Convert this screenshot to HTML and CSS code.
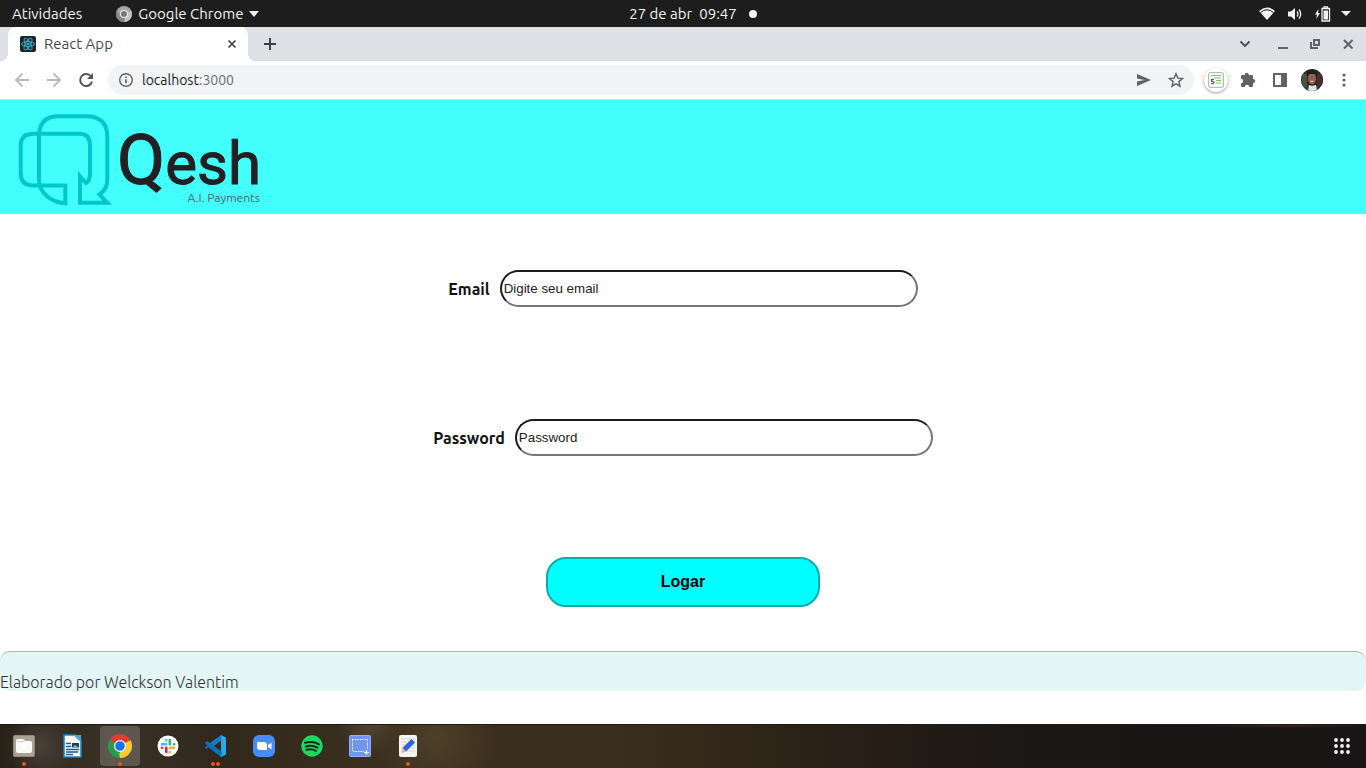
FILE: index.html
```html
<!DOCTYPE html>
<html lang="pt-BR">
<head>
<meta charset="utf-8">
<title>React App</title>
<link rel="stylesheet" href="styles.css">
</head>
<body>
<div class="topbar">
  <div class="topbar-left">
    <button class="bar-btn">Atividades</button>
    <button class="bar-btn app-menu">
      <svg width="16" height="16" viewBox="0 0 16 16"><circle cx="8" cy="8" r="8" fill="#a6a6a6"/><path d="M8 8 15.3 5A8 8 0 0 1 8 16Z" fill="#c4c4c4"/><path d="M1 4A8 8 0 0 0 8 16L10 10H4Z" fill="#858585"/><circle cx="8" cy="8" r="4" fill="#eee"/><circle cx="8" cy="8" r="3" fill="#777"/></svg>
      <span>Google Chrome</span>
      <svg width="10" height="6" viewBox="0 0 10 6"><path d="M0 0h10L5 6Z" fill="#f2f2f2"/></svg>
    </button>
  </div>
  <button class="bar-btn clock"><span>27 de abr</span><span>09:47</span><i class="dot"></i></button>
  <div class="tray">
    <svg width="16" height="16" viewBox="0 0 16 16"><path d="M0 5Q8-2 16 5L8 14Z" fill="#f2f2f2"/><path d="M1.500 6.500Q8 1 14.500 6.500" fill="none" stroke="#1d1d1d"/></svg>
    <svg width="16" height="16" viewBox="0 0 16 16"><path d="M1 5.500h3L8 2v12L4 10.500H1Z" fill="#f2f2f2"/><path d="M10 5.500q2 2.500 0 5M12 3.500q3.500 4.500 0 9" fill="none" stroke="#f2f2f2" stroke-width="1.300"/></svg>
    <svg width="16" height="16" viewBox="0 0 16 16"><path d="M3.500 3 0 8.500h2L1.300 13 5 7H3Z" fill="#f2f2f2"/><path d="M7 2.500h7.500v12.500H7ZM9 .8h3.500v1.700H9Z" fill="none" stroke="#f2f2f2" stroke-width="1.300"/><path d="M8.500 4.500h4.500v9H8.500Z" fill="#f2f2f2"/></svg>
    <svg class="caret" width="10" height="6" viewBox="0 0 10 6"><path d="M0 0h10L5 5Z" fill="#f2f2f2"/></svg>
  </div>
</div>

<div class="tabstrip">
  <div class="tab">
    <svg width="16" height="16" viewBox="0 0 16 16"><rect width="16" height="16" rx="2" fill="#20232a"/><g fill="none" stroke="#35b5cf" stroke-width=".9"><ellipse cx="8" cy="8" rx="6.500" ry="2.500"/><ellipse cx="8" cy="8" rx="6.500" ry="2.500" transform="rotate(60 8 8)"/><ellipse cx="8" cy="8" rx="6.500" ry="2.500" transform="rotate(120 8 8)"/></g><circle cx="8" cy="8" r="1.300" fill="#35b5cf"/></svg>
    <span class="tab-title">React App</span>
    <button class="icon-btn" aria-label="Fechar guia"><svg width="16" height="16" viewBox="0 0 16 16"><path d="m4.500 4.500 7 7m0-7-7 7" stroke="#3c4043" stroke-width="1.600"/></svg></button>
  </div>
  <button class="icon-btn new-tab" aria-label="Nova guia"><svg width="16" height="16" viewBox="0 0 16 16"><path d="M8 2v12M2 8h12" stroke="#3c4043" stroke-width="2"/></svg></button>
  <div class="window-controls">
    <button class="icon-btn search-tabs" aria-label="Pesquisar guias"><svg width="16" height="16" viewBox="0 0 16 16"><path d="m3.500 5.500 4.500 4.500 4.500-4.500" fill="none" stroke="#45494d" stroke-width="1.800"/></svg></button>
    <button class="icon-btn" aria-label="Minimizar"><svg width="16" height="16" viewBox="0 0 16 16"><path d="M4 12h10" stroke="#5f6368" stroke-width="2"/></svg></button>
    <button class="icon-btn" aria-label="Restaurar"><svg width="16" height="16" viewBox="0 0 16 16"><path d="M7 4h5v5H7ZM4 6v6h7" fill="none" stroke="#5f6368" stroke-width="2"/></svg></button>
    <button class="icon-btn" aria-label="Fechar"><svg width="16" height="16" viewBox="0 0 16 16"><path d="m4 4 8.500 8.500m0-8.500L4 12.500" stroke="#5f6368" stroke-width="2"/></svg></button>
  </div>
</div>

<div class="toolbar">
  <button class="icon-btn" aria-label="Voltar"><svg width="16" height="16" viewBox="0 0 16 16"><path d="M15 8H2m6.500-6.500L2 8l6.500 6.500" fill="none" stroke="#b9bbbe" stroke-width="1.800"/></svg></button>
  <button class="icon-btn" aria-label="Avançar"><svg width="16" height="16" viewBox="0 0 16 16"><path d="M1 8h13M7.500 1.500 14 8l-6.500 6.500" fill="none" stroke="#b9bbbe" stroke-width="1.800"/></svg></button>
  <button class="icon-btn" aria-label="Recarregar"><svg width="16" height="16" viewBox="0 0 16 16"><path d="M13 4.500A6 6 0 1 0 14 9.500" fill="none" stroke="#54585d" stroke-width="2"/><path d="M15 1v6H9Z" fill="#54585d"/></svg></button>
  <div class="omnibox">
    <svg width="16" height="16" viewBox="0 0 16 16"><circle cx="8" cy="8" r="6.300" fill="none" stroke="#5f6368" stroke-width="1.400"/><path d="M8 7.300v4M8 4.500v1.600" stroke="#5f6368" stroke-width="1.700"/></svg>
    <div class="address" role="textbox" aria-label="Endereço">localhost<span class="port">:3000</span></div>
    <button class="icon-btn" aria-label="Enviar"><svg width="16" height="16" viewBox="0 0 16 16"><path d="M1 2l14 6-14 6V9.500L8.500 8 1 6.500Z" fill="#5f6368"/></svg></button>
    <button class="icon-btn" aria-label="Favoritar"><svg width="16" height="16" viewBox="0 0 16 16"><path d="m8 1.800 1.800 4.300 4.700.4-3.600 3.100 1.100 4.600L8 11.800l-4 2.400 1.100-4.600L1.500 6.500l4.700-.4Z" fill="none" stroke="#5f6368" stroke-width="1.400"/></svg></button>
  </div>
  <button class="icon-btn extension" aria-label="Extensão"><svg width="16" height="16" viewBox="0 0 16 16"><rect x=".7" y=".7" width="14.600" height="14.600" rx="1" fill="#fff" stroke="#aaa"/><path d="M3 3.500h10M6 6h7M8 8.500h5M8 11h5" stroke="#75c94b" stroke-width="1.200"/><path d="M6 7.500H3.500v2q2.500-.5 2.500 1t-3 1.200" fill="none" stroke="#555" stroke-width="1.200"/></svg></button>
  <button class="icon-btn" aria-label="Extensões"><svg width="16" height="16" viewBox="0 0 16 16"><path d="M4.800 3V2.800a2 2 0 0 1 4 0V3H12q1 0 1 1v3h.2a2 2 0 0 1 0 4H13v3q0 1-1 1H9.200a2.200 2.200 0 0 0-4.400 0H2q-1 0-1-1v-2.800a2.200 2.200 0 0 0 0-4.400V4q0-1 1-1Z" fill="#5f6368"/></svg></button>
  <button class="icon-btn" aria-label="Painel lateral"><svg width="16" height="16" viewBox="0 0 16 16"><path d="M2 2h12v12H2Z" fill="none" stroke="#5f6368" stroke-width="2"/><path d="M9 2h5v12H9Z" fill="#5f6368"/></svg></button>
  <button class="icon-btn" aria-label="Perfil"><svg width="22" height="22" viewBox="0 0 22 22"><defs><clipPath id="face"><circle cx="11" cy="11" r="11"/></clipPath></defs><g clip-path="url(#face)"><path d="M0 0h22v22H0Z" fill="#302927"/><path d="M0 5h6v17H0Z" fill="#4c5148"/><path d="M16 5h6v12h-6Z" fill="#4a2d2b"/><path d="M2 22q2-6 7-6h4q6 0 7 6Z" fill="#343c45"/><path d="m8 16 3 1 4-1 1 6H7Z" fill="#dfe4e5"/><ellipse cx="11" cy="9.500" rx="4" ry="6" fill="#8f6150"/><path d="M6 8q-1-7 5-7t5 7l-2-3H8Z" fill="#211d1e"/><path d="M9.500 12q1.500 1.300 3 0" stroke="#f2d8cd" fill="none"/></g></svg></button>
  <button class="icon-btn" aria-label="Menu"><svg width="16" height="16" viewBox="0 0 16 16"><g fill="#5f6368"><circle cx="8" cy="3" r="1.600"/><circle cx="8" cy="8" r="1.600"/><circle cx="8" cy="13" r="1.600"/></g></svg></button>
</div>

<div class="page">
  <header class="site-header">
    <svg class="logo" width="250" height="100" viewBox="0 0 250 100" role="img" aria-label="Qesh A.I. Payments">
      <path d="M47.300 81.500V99.300C32 98 21 88 21 76V32Q21 12.300 41 12.300H68Q89.300 12.300 89.300 33V76Q89.300 85 81.500 90.500L89.300 98.700H62V72.300L68 79Q72 77 72 69V41Q72 29.700 61 29.700H15Q2.700 29.700 2.700 42V69Q2.700 81.500 15 81.500Z" fill="none" stroke="#00c8ca" stroke-width="4"/>
      <text class="logo-name" x="99" y="80"><tspan class="logo-q">Q</tspan><tspan class="logo-rest">esh</tspan></text>
      <text class="logo-sub" x="242" y="98" text-anchor="end">A.I. Payments</text>
    </svg>
  </header>
  <main>
    <form class="login">
      <div class="field"><label for="email">Email</label><input id="email" type="email" placeholder="Digite seu email"></div>
      <div class="field"><label for="password">Password</label><input id="password" type="password" placeholder="Password"></div>
      <button class="submit" type="button">Logar</button>
    </form>
  </main>
  <footer class="site-footer">Elaborado por Welckson Valentim</footer>
</div>

<nav class="dock" aria-label="Dock">
  <button class="dock-app running" aria-label="Arquivos"><svg width="24" height="24" viewBox="0 0 24 24"><rect x="1" y="1" width="22" height="22" rx="2" fill="#8f8778"/><rect x="2" y="2" width="20" height="20" rx="1" fill="#aaa294"/><path d="M4 7q0-2 2-2h5l2 2h5q2 0 2 2v8q0 2-2 2H6q-2 0-2-2Z" fill="#fbfaf8"/><path d="M5 7.500h7" stroke="#d2cec7"/></svg></button>
  <button class="dock-app" aria-label="Writer"><svg width="24" height="24" viewBox="0 0 24 24"><path d="M4 1h11l6 6v16H4Z" fill="#fff" stroke="#1685be" stroke-width="1.600"/><path d="M14 1h7v7Z" fill="#46a8dc"/><path d="M6 9.500h5M6 12.500h5M6 15.500h13M6 18h12M6 20.500h7" stroke="#155e8b" stroke-width="1.300"/><path d="M12 9h7v4.500h-7Z" fill="#263f53"/><path d="m13 13 2-2 3 2Z" fill="#79bfdf"/></svg></button>
  <button class="dock-app active running" aria-label="Google Chrome"><svg width="24" height="24" viewBox="0 0 24 24"><path d="M12 12 1.600 6A12 12 0 0 1 22.400 6Z" fill="#df3c31"/><path d="M12 12 22.400 6A12 12 0 0 1 12 24Z" fill="#fccb2e"/><path d="M12 12V24A12 12 0 0 1 1.600 6Z" fill="#269c4b"/><path d="M12 6.500h10.700L22.400 6H12Z" fill="#df3c31"/><path d="M16.800 14.800 12 24l-1-5Z" fill="#fccb2e"/><path d="m7.200 14.800 4.800 2.700L10.500 22 3 14 1.600 6Z" fill="#269c4b"/><circle cx="12" cy="12" r="6" fill="#fff"/><circle cx="12" cy="12" r="4.800" fill="#1a73e8"/></svg></button>
  <button class="dock-app" aria-label="Slack"><svg width="24" height="24" viewBox="0 0 24 24"><circle cx="12" cy="12" r="10.500" fill="#fff"/><g stroke-width="2.600" stroke-linecap="round"><path d="M10.300 6v.2M6 10.300h4.300" stroke="#36c5f0"/><path d="M13.800 6v4.300M18 10.300h.2" stroke="#2eb67d"/><path d="M13.800 13.800H18M13.800 18v.2" stroke="#ecb22e"/><path d="M10.300 13.800V18M6 13.800h.2" stroke="#e01e5a"/></g></svg></button>
  <button class="dock-app running two-windows" aria-label="Visual Studio Code"><svg width="24" height="24" viewBox="0 0 24 24"><path d="m17 1 5 2.500v17L17 23Z" fill="#27a8ef"/><path d="m17 6.500-7 5.500 7 5.500v5.500L4 12.700 2.500 15 1 13.800l4-4L17 1Z" fill="#167bc2"/><path d="M1.500 8.500 3 7l15 11-1 5L1 9.500Z" fill="#0870b5"/></svg></button>
  <button class="dock-app" aria-label="Zoom"><svg width="24" height="24" viewBox="0 0 24 24"><rect x="1" y="1" width="22" height="22" rx="6" fill="#4a8cf7"/><path d="M5 8h7q3 0 3 3v5H8q-3 0-3-3ZM16 11l3.500-2.500v7L16 13Z" fill="#fff"/></svg></button>
  <button class="dock-app" aria-label="Spotify"><svg width="24" height="24" viewBox="0 0 24 24"><circle cx="12" cy="12" r="10.700" fill="#1ed760"/><path d="M5 8.800q7.500-2.200 14 1.500M5.800 12.500q6-2 11.500 1.200M6.500 15.800q5-1.500 9.500 1" fill="none" stroke="#182c1e" stroke-width="2" stroke-linecap="round"/></svg></button>
  <button class="dock-app" aria-label="Captura de tela"><svg width="24" height="24" viewBox="0 0 24 24"><rect x="1.500" y="1.500" width="21" height="21" rx="1" fill="#6f97f0" stroke="#8fb0fb"/><path d="M4.500 5.500h15v10M4.500 5.500v12H16" fill="none" stroke="#fff" stroke-dasharray="1.500 1"/><path d="M18.500 16v5M16 18.500h5" stroke="#fff" stroke-width="1.200"/></svg></button>
  <button class="dock-app running" aria-label="Editor de texto"><svg width="24" height="24" viewBox="0 0 24 24"><rect x="3" y="1" width="18" height="22" rx="2" fill="#f4f4f2"/><path d="M5 5h14M5 8h14M5 11h14M5 14h14M5 17h14" stroke="#d5d5d3"/><path d="M15.500 5 19 8.500l-9 9L6.500 14Z" fill="#2f62d8"/><path d="m6.500 14 3.500 3.500-4.500 1.800Z" fill="#e3b58d"/></svg></button>
  <button class="dock-app show-apps" aria-label="Mostrar aplicativos"><svg width="24" height="24" viewBox="0 0 24 24"><g fill="#f4f4f4"><circle cx="6" cy="6" r="1.900"/><circle cx="12" cy="6" r="1.900"/><circle cx="18" cy="6" r="1.900"/><circle cx="6" cy="12" r="1.900"/><circle cx="12" cy="12" r="1.900"/><circle cx="18" cy="12" r="1.900"/><circle cx="6" cy="18" r="1.900"/><circle cx="12" cy="18" r="1.900"/><circle cx="18" cy="18" r="1.900"/></g></svg></button>
</nav>
</body>
</html>
```

FILE: styles.css
```css
* { box-sizing: border-box; }
body {
  margin: 0;
  min-height: 100vh;
  display: flex;
  flex-direction: column;
  background: #fff;
  color: #111;
  font: 15px/20px Ubuntu, "Noto Sans", sans-serif;
}
button { font: inherit; color: inherit; background: none; border: 0; padding: 0; }
svg { display: block; flex: none; }

.topbar {
  height: 27px;
  display: grid;
  grid-template-columns: 1fr auto 1fr;
  align-items: center;
  background: #1d1d1d;
  color: #f2f2f2;
}
.topbar-left { display: flex; gap: 34px; padding-left: 12px; }
.bar-btn { display: flex; align-items: center; }
.app-menu { gap: 6px; }
.clock { gap: 7px; padding-left: 20px; }
.dot { width: 8px; height: 8px; margin-left: 5px; border-radius: 50%; background: #f2f2f2; }
.tray { display: flex; align-items: center; justify-content: flex-end; gap: 12px; padding-right: 15px; }
.caret { margin-left: -2px; }

.tabstrip { height: 34px; display: flex; align-items: center; background: #dee0e6; padding: 0 10px 0 8px; }
.tab {
  position: relative;
  width: 240px;
  height: 34px;
  display: flex;
  align-items: center;
  gap: 8px;
  padding: 0 8px 0 12px;
  border-radius: 8px 8px 0 0;
  background: #fff;
  color: #45494d;
}
.tab::before, .tab::after { content: ""; position: absolute; bottom: 0; width: 8px; height: 8px; }
.tab::before { left: -8px; background: radial-gradient(circle at 0 0, transparent 8px, #fff 8px); }
.tab::after { right: -8px; background: radial-gradient(circle at 100% 0, transparent 8px, #fff 8px); }
.tab-title { flex: 1; }
.icon-btn { display: flex; align-items: center; justify-content: center; flex: none; }
.new-tab { margin-left: 14px; }
.window-controls { display: flex; gap: 17px; margin-left: auto; }
.search-tabs { margin-right: 4px; }

.toolbar { height: 39px; display: flex; align-items: center; border-bottom: 1px solid #dadce0; padding: 0 6px; }
.toolbar .icon-btn { width: 32px; height: 32px; }
.omnibox {
  flex: 1;
  height: 30px;
  display: flex;
  align-items: center;
  gap: 8px;
  margin: 0 10px 0 6px;
  padding: 0 2px 0 10px;
  border-radius: 15px;
  background: #f1f3f4;
}
.omnibox .icon-btn + .icon-btn { margin-left: -8px; }
.address { flex: 1; color: #202124; font-size: 14px; }
.port { color: #6b6f73; }
.toolbar .extension { width: 24px; height: 24px; margin-right: 4px; border-radius: 50%; background: #fff; box-shadow: 0 1px 3px #0006; }

.page { flex: 1; }
.site-header { height: 114px; padding: 4px 18px; background: #43fffb; }
.logo { overflow: visible; }
.logo-name { font-family: Roboto, sans-serif; fill: #222022; stroke: #222022; stroke-width: 1px; }
.logo-q { font-size: 70px; }
.logo-rest { font-size: 60px; }
.logo-sub { font: 12px Ubuntu, Roboto, sans-serif; fill: #4c6668; }

.login { display: flex; flex-direction: column; align-items: center; padding: 56px 16px 44px; }
.field { display: flex; align-items: center; gap: 10px; }
.field + .field { margin-top: 112px; }
.field label { font-size: 16px; font-weight: 700; }
.field input {
  width: 418px;
  height: 37px;
  padding: 1px 2px;
  border: 2px solid;
  border-color: #1c1c1c #767676 #767676 #1c1c1c;
  border-radius: 20px;
  background: #fff;
  font-family: "Liberation Sans", sans-serif;
}
.field input::placeholder { color: #222; opacity: 1; }
.submit {
  width: 274px;
  height: 50px;
  margin-top: 101px;
  border: 2px solid #08acac;
  border-radius: 20px;
  background: #00ffff;
  color: #000;
  font: bold 16px "Liberation Sans", sans-serif;
}
.site-footer {
  height: 40px;
  padding-top: 20px;
  border-top: 1px solid #a9b8b7;
  border-radius: 10px;
  background: #e3f5f5;
  color: #333;
  font-size: 16px;
  font-weight: 300;
}

.dock {
  height: 44px;
  display: flex;
  align-items: flex-start;
  gap: 8px;
  padding: 1px 4px 0;
  border-top: 1px solid #1c1a1b;
  background:
    radial-gradient(ellipse at 94% 0, #3d2918, transparent 90px),
    radial-gradient(circle at 3% 50%, #4a4238, transparent 34px),
    radial-gradient(circle at 32% 30%, #4d4029, transparent 60px),
    radial-gradient(circle at 27% 0, #50452f, transparent 30px),
    linear-gradient(90deg, #292219, #3a3227 8%, #31281d 16%, #3b301e 28%, #3a2e1c 45%, #2b2117 60%, #1a1715 75%, #191516);
}
.dock-app { position: relative; width: 40px; height: 40px; display: flex; align-items: center; justify-content: center; border-radius: 4px; }
.active { background: #ffffff30; }
.running::after { content: ""; position: absolute; bottom: 0; left: 18px; width: 4px; height: 4px; border-radius: 50%; background: #e95420; }
.two-windows::after { left: 15px; box-shadow: 5px 0 #e95420; }
.show-apps { margin-left: auto; }
```
